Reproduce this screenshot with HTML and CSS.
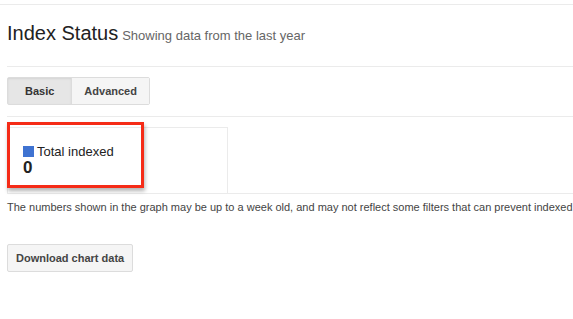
FILE: index.html
```html
<!DOCTYPE html>
<html>
<head>
<meta charset="utf-8">
<link rel="stylesheet" href="styles.css">
</head>
<body>
<div class="topline"></div>
<div class="page">
  <div class="header">
    <span class="title">Index Status</span>
    <span class="subtitle">Showing data from the last year</span>
  </div>
  <div class="tabs-row">
    <div class="tabs">
      <div class="tab active">Basic</div>
      <div class="tab">Advanced</div>
    </div>
  </div>
  <div class="chart-section">
    <div class="card">
      <div class="legend"><span class="swatch"></span><span class="legend-label">Total indexed</span></div>
      <div class="value">0</div>
      <div class="highlight"></div>
    </div>
  </div>
  <p class="note">The numbers shown in the graph may be up to a week old, and may not reflect some filters that can prevent indexed</p>
  <div class="download">Download chart data</div>
</div>
</body>
</html>
```

FILE: styles.css
```css
html, body {
  margin: 0;
  padding: 0;
  background: #fff;
  font-family: "Liberation Sans", Arial, sans-serif;
  color: #222;
  overflow: hidden;
}
body {
  padding-top: 4px;
}
.topline {
  border-top: 1px solid #ebebeb;
}
.page {
  padding-left: 7px;
}
.header {
  display: flex;
  align-items: baseline;
  gap: 4px;
  height: 24px;
  margin-top: 16px;
  padding-bottom: 21px;
  border-bottom: 1px solid #ebebeb;
  white-space: nowrap;
}
.title {
  font-size: 20px;
  line-height: 24px;
  color: #222;
}
.subtitle {
  font-size: 13px;
  line-height: 16px;
  color: #666;
}
.tabs-row {
  padding: 10px 0 11px;
  border-bottom: 1px solid #ebebeb;
}
.tabs {
  display: inline-flex;
  border: 1px solid #dcdcdc;
  border-radius: 2px;
}
.tab {
  height: 26px;
  line-height: 26px;
  font-size: 11px;
  font-weight: bold;
  color: #444;
  background: #f5f5f5;
  padding: 0 12px;
}
.tab.active {
  background: #e6e6e6;
  color: #333;
  padding: 0 17px;
  border-right: 1px solid #dcdcdc;
  box-shadow: inset 0 1px 2px rgba(0,0,0,0.08);
}
.chart-section {
  padding-top: 10px;
  border-bottom: 1px solid #ebebeb;
}
.card {
  position: relative;
  width: 219px;
  height: 65px;
  border: 1px solid #ebebeb;
  border-bottom: none;
}
.legend {
  display: flex;
  align-items: center;
  margin: 16px 0 0 15px;
  height: 15px;
  font-size: 13px;
  line-height: 15px;
}
.swatch {
  display: inline-block;
  width: 11px;
  height: 11px;
  background: #3f73d1;
  margin-right: 3px;
}
.legend-label {
  color: #222;
}
.value {
  margin-left: 15px;
  font-size: 17px;
  font-weight: bold;
  line-height: 18px;
  color: #222;
}
.highlight {
  position: absolute;
  left: -1px;
  top: -6px;
  width: 131px;
  height: 60px;
  border: 3px solid #f52b17;
  box-shadow: 1px 3px 4px rgba(0,0,0,0.3);
}
.note {
  margin: 6px 0 0;
  font-size: 11px;
  line-height: 14px;
  color: #444;
  white-space: nowrap;
}
.download {
  display: inline-block;
  margin-top: 30px;
  height: 26px;
  line-height: 26px;
  padding: 0 8px;
  font-size: 11px;
  font-weight: bold;
  color: #444;
  background: #f5f5f5;
  border: 1px solid #dcdcdc;
  border-radius: 2px;
}
```
